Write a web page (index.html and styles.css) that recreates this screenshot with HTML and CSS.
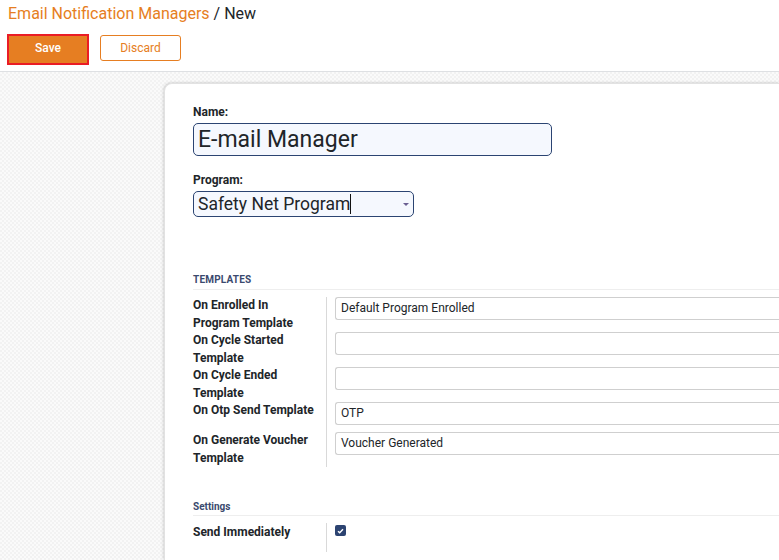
FILE: index.html
```html
<!DOCTYPE html>
<html>
<head>
<meta charset="utf-8">
<link rel="stylesheet" href="styles.css">
</head>
<body>
<header class="topbar">
  <div class="breadcrumb"><span class="crumb-link">Email Notification Managers</span><span class="crumb-sep"> / </span><span class="crumb-current">New</span></div>
  <div class="actions">
    <button class="btn btn-save">Save</button>
    <button class="btn btn-discard">Discard</button>
  </div>
</header>
<main class="content">
  <section class="sheet">
    <div class="field">
      <label class="field-label">Name:</label>
      <div class="input-name">E-mail Manager</div>
    </div>
    <div class="field">
      <label class="field-label">Program:</label>
      <div class="input-select"><span class="caret-text">Safety Net Program</span><span class="select-arrow"></span></div>
    </div>

    <h3 class="group-title upper">Templates</h3>
    <div class="group-grid">
      <div class="g-label">On Enrolled In Program Template</div>
      <div class="g-value"><div class="g-input">Default Program Enrolled</div></div>
      <div class="g-label">On Cycle Started Template</div>
      <div class="g-value"><div class="g-input"></div></div>
      <div class="g-label">On Cycle Ended Template</div>
      <div class="g-value"><div class="g-input"></div></div>
      <div class="g-label">On Otp Send Template</div>
      <div class="g-value"><div class="g-input">OTP</div></div>
      <div class="g-label">On Generate Voucher Template</div>
      <div class="g-value"><div class="g-input">Voucher Generated</div></div>
    </div>

    <h3 class="group-title settings">Settings</h3>
    <div class="group-grid single">
      <div class="g-label">Send Immediately</div>
      <div class="g-value"><span class="checkbox"><svg width="7" height="6" viewBox="0 0 7 6"><path d="M1 3.2 L2.7 4.8 L6 1.3" fill="none" stroke="#fff" stroke-width="1.4"/></svg></span></div>
    </div>
  </section>
</main>
</body>
</html>
```

FILE: styles.css
```css
html, body {
  margin: 0;
  padding: 0;
  height: 100%;
}
body {
  font-family: Roboto, "Liberation Sans", Arial, sans-serif;
  color: #212529;
  overflow: hidden;
  background-color: #f7f7f7;
  background-image: repeating-conic-gradient(#f2f2f2 0 25%, #fafafa 0 50%);
  background-size: 4px 4px;
}
.topbar {
  background: #fff;
  padding: 4px 8px 6px 8px;
  border-bottom: 1px solid #dee0e3;
}
.breadcrumb {
  font-size: 16px;
  line-height: 19px;
}
.crumb-link { color: #e67e22; }
.crumb-sep, .crumb-current { color: #212529; }
.actions {
  margin-top: 11px;
  display: flex;
  align-items: flex-start;
  gap: 11px;
  margin-left: -1px;
}
.btn {
  font-family: Roboto, "Liberation Sans", Arial, sans-serif;
  font-size: 12px;
  padding: 0;
  cursor: pointer;
}
.btn-save {
  width: 82px;
  height: 31px;
  background: #e67e22;
  color: #fff;
  font-weight: 500;
  border: 2px solid #ea1c25;
  border-radius: 0;
  padding-bottom: 4px;
}
.btn-discard {
  margin-top: 1px;
  width: 81px;
  height: 26px;
  background: #fff;
  color: #e67e22;
  border: 1px solid #e67e22;
  border-radius: 3px;
}
.content {
  padding-top: 11px;
  padding-left: 164px;
}
.sheet {
  min-height: 477px;
  background: #fff;
  border-top-left-radius: 8px;
  box-shadow: -1px 0 3px rgba(0,0,0,0.12), 0 -1px 2px rgba(0,0,0,0.06);
  border: 1px solid #e2e2e2;
  border-right: none;
  border-bottom: none;
  padding: 21px 0 0 28px;
  box-sizing: border-box;
}
.field { margin-bottom: 17px; }
.field-label {
  display: block;
  font-size: 12px;
  font-weight: 700;
  line-height: 14px;
  color: #212529;
  margin-bottom: 4px;
}
.input-name {
  width: 353px;
  height: 31px;
  background: #f5f8fe;
  border: 1px solid #2b4472;
  border-radius: 5px;
  font-size: 23px;
  line-height: 31px;
  padding-left: 4px;
  color: #212529;
  box-sizing: content-box;
}
.input-select {
  position: relative;
  width: 215px;
  height: 24px;
  background: #f5f8fe;
  border: 1px solid #2b4472;
  border-radius: 5px;
  font-size: 17.5px;
  line-height: 25px;
  padding-left: 4px;
  color: #212529;
}
.caret-text {
  border-right: 1.5px solid #111;
}
.select-arrow {
  position: absolute;
  right: 4px;
  top: 11px;
  width: 0;
  height: 0;
  border-left: 3px solid transparent;
  border-right: 3px solid transparent;
  border-top: 3px solid #6a5f92;
}
.group-title {
  margin: 0;
  font-size: 10px;
  font-weight: 700;
  color: #3b4a6e;
  line-height: 14px;
  padding-bottom: 2px;
  border-bottom: 1px solid #eeeeee;
}
.group-title.upper {
  text-transform: uppercase;
  margin-top: 56px;
  letter-spacing: 0.2px;
}
.group-title.settings {
  margin-top: 33px;
  padding-bottom: 1px;
}
.group-grid {
  display: grid;
  grid-template-columns: 134px 1fr;
  margin-top: 7px;
}
.g-label {
  font-size: 12px;
  font-weight: 700;
  line-height: 17.5px;
  color: #212529;
  border-right: 1px solid #d9d9d9;
  padding-right: 10px;
}
.g-value {
  padding-left: 8px;
  padding-bottom: 7px;
}
.g-input {
  height: 21px;
  border: 1px solid #cfcfcf;
  border-right: none;
  border-radius: 3px 0 0 3px;
  font-size: 12px;
  line-height: 21px;
  padding-left: 5px;
  color: #212529;
}
.group-grid.single .g-label {
  padding-top: 1px;
  padding-bottom: 10px;
}
.group-grid.single .g-value {
  display: flex;
  align-items: flex-start;
  padding-top: 2px;
}
.checkbox {
  display: flex;
  align-items: center;
  justify-content: center;
  width: 11px;
  height: 11px;
  background: #2c4371;
  border-radius: 2px;
}
```
